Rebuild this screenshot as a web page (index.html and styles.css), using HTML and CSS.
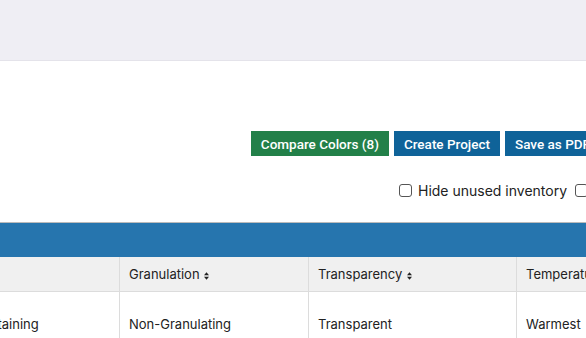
FILE: index.html
```html
<!DOCTYPE html>
<html>
<head>
<meta charset="utf-8">
<link rel="stylesheet" href="styles.css">
</head>
<body>
<div class="page">
  <div class="topbar"></div>
  <div class="content">
    <div class="actions">
      <button class="btn btn-green">Compare Colors (8)</button>
      <button class="btn btn-blue">Create Project</button>
      <button class="btn btn-blue">Save as PDF</button>
    </div>
    <div class="filters">
      <label class="check"><span class="box"></span>Hide unused inventory</label>
      <label class="check"><span class="box"></span>Hide discontinued</label>
    </div>
  </div>
  <div class="table-wrap">
    <table class="grid">
      <thead>
        <tr class="band"><th colspan="5"></th></tr>
        <tr class="heads">
          <th class="c1">Staining <svg class="sort" viewBox="0 0 6 9" width="5" height="8"><path d="M3 0L6 3.5H0Z M3 9L6 5.5H0Z"/></svg></th>
          <th class="c2">Granulation <svg class="sort" viewBox="0 0 6 9" width="5" height="8"><path d="M3 0L6 3.5H0Z M3 9L6 5.5H0Z"/></svg></th>
          <th class="c3">Transparency <svg class="sort" viewBox="0 0 6 9" width="5" height="8"><path d="M3 0L6 3.5H0Z M3 9L6 5.5H0Z"/></svg></th>
          <th class="c4">Temperature <svg class="sort" viewBox="0 0 6 9" width="5" height="8"><path d="M3 0L6 3.5H0Z M3 9L6 5.5H0Z"/></svg></th>
        </tr>
      </thead>
      <tbody>
        <tr>
          <td class="c1">Medium Staining</td>
          <td class="c2">Non-Granulating</td>
          <td class="c3">Transparent</td>
          <td class="c4">Warmest</td>
        </tr>
      </tbody>
    </table>
  </div>
</div>
</body>
</html>
```

FILE: styles.css
```css
* { box-sizing: border-box; }
html, body { margin: 0; padding: 0; }
body {
  width: 586px;
  height: 338px;
  overflow: hidden;
  background: #fff;
  font-family: Inter, "Noto Sans", sans-serif;
  color: #212529;
}
.page { width: 586px; height: 338px; overflow: hidden; }
.topbar {
  height: 61px;
  background: #efeef4;
  border-bottom: 1px solid #e4e3ea;
}
.content {
  width: 620px;
  padding-top: 70px;
}
.actions {
  display: flex;
  justify-content: flex-end;
  gap: 5px;
  padding-right: 20px;
}
.btn {
  font-family: Roboto, "Liberation Sans", Arial, sans-serif;
  font-size: 13.5px;
  font-weight: 500;
  color: #fff;
  border: 0;
  border-radius: 0;
  height: 25px;
  padding: 0 10px;
}
.btn-green { background: #228049; }
.btn-blue { background: #0f6399; }
.filters {
  display: flex;
  gap: 8px;
  margin-top: 26px;
  padding-left: 399px;
  white-space: nowrap;
}
.check {
  display: flex;
  align-items: center;
  font-size: 14px;
  color: #222;
}
.box {
  width: 13px;
  height: 13px;
  border: 1px solid #555;
  border-radius: 3px;
  margin-right: 6px;
  background: #fff;
}
.table-wrap {
  margin-top: 23px;
  overflow: hidden;
  width: 586px;
}
.grid {
  border-collapse: collapse;
  margin-left: -74px;
  font-size: 13px;
  white-space: nowrap;
}
.band th {
  height: 34px;
  background: #2675ae;
  border-top: 1px solid #bbb;
  padding: 0;
}
.heads th {
  height: 35px;
  background: #f0f0f0;
  font-weight: normal;
  text-align: left;
  padding: 0 9px;
  border: 1px solid #dcdcdc;
  border-top: 0;
  color: #222;
}
td {
  height: 46px;
  vertical-align: top;
  padding: 24px 9px 0;
  border-left: 1px solid #dcdcdc;
  border-right: 1px solid #dcdcdc;
  color: #222;
}
.c1 { width: 193px; min-width: 193px; }
.c2 { width: 189px; min-width: 189px; }
.c3 { width: 208px; min-width: 208px; }
.c4 { width: 160px; min-width: 160px; }
.sort { fill: #222; vertical-align: -1px; margin-left: 1px; }
```
